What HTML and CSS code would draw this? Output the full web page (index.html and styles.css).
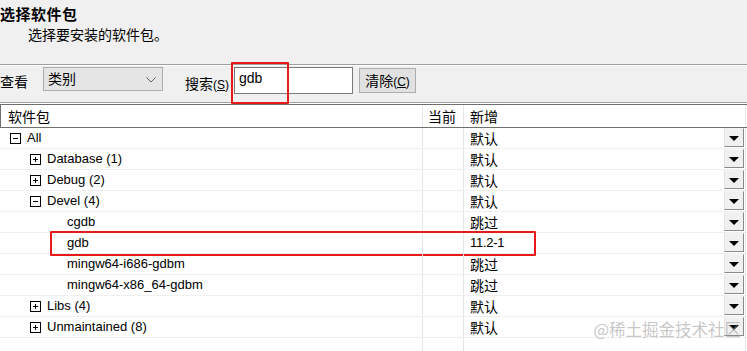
FILE: index.html
```html
<!DOCTYPE html>
<html lang="zh">
<head>
<meta charset="utf-8">
<title>选择软件包</title>
<link rel="stylesheet" href="styles.css">
</head>
<body>
<div class="page">
  <header class="intro">
    <h1 class="title">选择软件包</h1>
    <p class="subtitle">选择要安装的软件包。</p>
  </header>

  <div class="toolbar">
    <span class="lbl view-lbl">查看</span>
    <div class="combo">
      <span class="combo-text">类别</span>
      <svg class="chev" width="10" height="6" viewBox="0 0 10 6"><path d="M0.5 0.5 L5 5 L9.5 0.5" fill="none" stroke="#606060" stroke-width="1"/></svg>
    </div>
    <span class="lbl search-lbl">搜索<span class="acc">(<u>S</u>)</span></span>
    <div class="search"><span class="search-text">gdb</span></div>
    <button class="btn">清除<span class="acc">(<u>C</u>)</span></button>
    <div class="mark mark-search"></div>
  </div>

  <div class="list">
    <div class="list-head">
      <div class="hcell c1">软件包</div>
      <div class="hcell c2">当前</div>
      <div class="hcell c3">新增</div>
    </div>

    <div class="row">
      <div class="cell c1 lv0"><svg class="tg" width="11" height="11" viewBox="0 0 11 11"><rect x="0.5" y="0.5" width="10" height="10" fill="#fff" stroke="#000"/><path d="M3 5.5 H8" stroke="#000"/></svg><span class="name">All</span></div>
      <div class="cell c2"></div>
      <div class="cell c3"><span class="val">默认</span><span class="dd"><i class="tri"></i></span></div>
    </div>
    <div class="row">
      <div class="cell c1 lv1"><svg class="tg" width="11" height="11" viewBox="0 0 11 11"><rect x="0.5" y="0.5" width="10" height="10" fill="#fff" stroke="#000"/><path d="M3 5.5 H8 M5.5 3 V8" stroke="#000"/></svg><span class="name">Database (1)</span></div>
      <div class="cell c2"></div>
      <div class="cell c3"><span class="val">默认</span><span class="dd"><i class="tri"></i></span></div>
    </div>
    <div class="row">
      <div class="cell c1 lv1"><svg class="tg" width="11" height="11" viewBox="0 0 11 11"><rect x="0.5" y="0.5" width="10" height="10" fill="#fff" stroke="#000"/><path d="M3 5.5 H8 M5.5 3 V8" stroke="#000"/></svg><span class="name">Debug (2)</span></div>
      <div class="cell c2"></div>
      <div class="cell c3"><span class="val">默认</span><span class="dd"><i class="tri"></i></span></div>
    </div>
    <div class="row">
      <div class="cell c1 lv1"><svg class="tg" width="11" height="11" viewBox="0 0 11 11"><rect x="0.5" y="0.5" width="10" height="10" fill="#fff" stroke="#000"/><path d="M3 5.5 H8" stroke="#000"/></svg><span class="name">Devel (4)</span></div>
      <div class="cell c2"></div>
      <div class="cell c3"><span class="val">默认</span><span class="dd"><i class="tri"></i></span></div>
    </div>
    <div class="row">
      <div class="cell c1 lv2"><span class="name">cgdb</span></div>
      <div class="cell c2"></div>
      <div class="cell c3"><span class="val">跳过</span><span class="dd"><i class="tri"></i></span></div>
    </div>
    <div class="row row-marked">
      <div class="cell c1 lv2"><span class="name">gdb</span></div>
      <div class="cell c2"></div>
      <div class="cell c3"><span class="val num">11.2-1</span><span class="dd"><i class="tri"></i></span></div>
      <div class="mark mark-row"></div>
    </div>
    <div class="row">
      <div class="cell c1 lv2"><span class="name">mingw64-i686-gdbm</span></div>
      <div class="cell c2"></div>
      <div class="cell c3"><span class="val">跳过</span><span class="dd"><i class="tri"></i></span></div>
    </div>
    <div class="row">
      <div class="cell c1 lv2"><span class="name">mingw64-x86_64-gdbm</span></div>
      <div class="cell c2"></div>
      <div class="cell c3"><span class="val">跳过</span><span class="dd"><i class="tri"></i></span></div>
    </div>
    <div class="row">
      <div class="cell c1 lv1"><svg class="tg" width="11" height="11" viewBox="0 0 11 11"><rect x="0.5" y="0.5" width="10" height="10" fill="#fff" stroke="#000"/><path d="M3 5.5 H8 M5.5 3 V8" stroke="#000"/></svg><span class="name">Libs (4)</span></div>
      <div class="cell c2"></div>
      <div class="cell c3"><span class="val">默认</span><span class="dd"><i class="tri"></i></span></div>
    </div>
    <div class="row">
      <div class="cell c1 lv1"><svg class="tg" width="11" height="11" viewBox="0 0 11 11"><rect x="0.5" y="0.5" width="10" height="10" fill="#fff" stroke="#000"/><path d="M3 5.5 H8 M5.5 3 V8" stroke="#000"/></svg><span class="name">Unmaintained (8)</span></div>
      <div class="cell c2"></div>
      <div class="cell c3"><span class="val">默认</span><span class="dd"><i class="tri"></i></span></div>
    </div>
    <div class="row filler">
      <div class="cell c1"></div>
      <div class="cell c2"></div>
      <div class="cell c3"></div>
    </div>
  </div>

  <div class="watermark">@稀土掘金技术社区</div>
</div>
</body>
</html>
```

FILE: styles.css
```css
* { box-sizing: border-box; }
html, body { margin: 0; padding: 0; }
body {
  background: #f0f0f0;
  font-family: "Liberation Sans", "Noto Sans CJK SC", sans-serif;
  font-size: 13px;
  color: #000;
  width: 747px;
  height: 351px;
  overflow: hidden;
}
.page {
  position: relative;
  width: 747px;
  height: 351px;
  display: flex;
  flex-direction: column;
}
.intro {
  border-bottom: 1px solid #a0a0a0;
  box-shadow: 0 1px 0 #ffffff;
  height: 65px;
  padding-top: 4px;
}
.title {
  margin: 0;
  font-family: "Noto Sans CJK SC", sans-serif;
  font-size: 15px;
  font-weight: 700;
  line-height: 20px;
  letter-spacing: 0.5px;
}
.subtitle {
  margin: 0;
  padding-left: 28px;
  font-family: "Noto Sans CJK SC", sans-serif;
  font-size: 14px;
  line-height: 20px;
}
.toolbar {
  position: relative;
  height: 37px;
  display: flex;
  align-items: flex-start;
  padding-top: 2px;
}
.lbl {
  font-family: "Noto Sans CJK SC", sans-serif;
  font-size: 14px;
  line-height: 20px;
  margin-top: 4px;
}
.acc {
  font-family: "Liberation Sans", sans-serif;
  font-size: 12px;
}
.view-lbl { width: 43px; }
.combo {
  width: 120px;
  height: 24px;
  border: 1px solid #adadad;
  background: #e5e5e5;
  display: flex;
  align-items: center;
  justify-content: space-between;
  padding: 0 6px 0 4px;
}
.combo-text {
  font-family: "Noto Sans CJK SC", sans-serif;
  font-size: 14px;
  line-height: 20px;
  margin-top: -3px;
}
.chev { margin-top: 1px; }
.search-lbl { margin-left: 22px; margin-top: 6px; }
.search {
  margin-left: 5px;
  width: 119px;
  height: 27px;
  background: #fff;
  border: 1px solid #7a7a7a;
  padding: 2px 4px;
}
.search-text {
  font-family: "Liberation Sans", sans-serif;
  font-size: 14px;
  line-height: 16px;
}
.btn {
  margin-left: 6px;
  margin-top: 1px;
  width: 57px;
  height: 25px;
  background: #e1e1e1;
  border: 1px solid #adadad;
  padding: 0;
  font-family: "Noto Sans CJK SC", sans-serif;
  font-size: 14px;
  color: #000;
  line-height: 20px;
}
.mark {
  position: absolute;
  border: 2px solid #e8191b;
  border-radius: 1px;
  pointer-events: none;
}
.mark-search {
  left: 231px;
  top: -3px;
  width: 58px;
  height: 42px;
}

.list {
  flex: 1;
  display: flex;
  flex-direction: column;
  background: #fff;
  border-top: 1px solid #a0a0a0;
  width: 747px;
}
.list-head {
  display: flex;
  height: 24px;
  margin-top: 1px;
  border-top: 1px solid #6f6f6f;
  border-bottom: 1px solid #6f6f6f;
}
.hcell {
  font-family: "Noto Sans CJK SC", sans-serif;
  font-size: 14px;
  line-height: 22px;
}
.list-head .c1 {
  border-left: 1px solid #6f6f6f;
  padding-left: 7px;
}
.list-head .c2 { padding-left: 5px; }
.list-head .c3 { padding-left: 6px; }

.c1 { width: 423px; border-right: 1px solid #e5e5e5; }
.c2 { width: 41px; border-right: 1px solid #e5e5e5; }
.c3 { width: 282px; border-right: 1px solid #e5e5e5; }

.row {
  position: relative;
  display: flex;
  height: 21px;
  border-bottom: 1px solid #f0f0f0;
}
.row.filler { flex: 1; border-bottom: 0; }
.cell {
  display: flex;
  align-items: center;
  height: 100%;
}
.lv0 { padding-left: 10px; }
.lv1 { padding-left: 30px; }
.lv2 { padding-left: 67px; }
.tg { flex: none; margin-right: 6px; margin-top: 1px; }
.name {
  font-size: 13px;
  line-height: 16px;
  white-space: nowrap;
}
.row .c3 { padding-left: 6px; }
.val {
  font-family: "Noto Sans CJK SC", sans-serif;
  font-size: 14px;
  line-height: 18px;
  flex: 1;
}
.val.num {
  font-family: "Liberation Sans", sans-serif;
  font-size: 13px;
  letter-spacing: -0.3px;
}
.dd {
  flex: none;
  align-self: flex-start;
  width: 20px;
  height: 19px;
  margin-right: 1px;
  background: #f0f0f0;
  border-top: 1px solid #f4f4f4;
  border-left: 1px solid #e3e3e3;
  border-right: 1px solid #8a8a8a;
  border-bottom: 1px solid #8a8a8a;
  display: flex;
  align-items: center;
  justify-content: center;
}
.tri {
  display: block;
  width: 0;
  height: 0;
  border-left: 5px solid transparent;
  border-right: 5px solid transparent;
  border-top: 5px solid #000;
  margin-top: 2px;
}
.mark-row {
  left: 50px;
  top: -2px;
  width: 486px;
  height: 25px;
}
.watermark {
  position: absolute;
  right: 6px;
  bottom: 12px;
  font-family: "Noto Sans CJK SC", sans-serif;
  font-size: 16.5px;
  line-height: 20px;
  color: rgba(150, 150, 150, 0.55);
  pointer-events: none;
}
```
